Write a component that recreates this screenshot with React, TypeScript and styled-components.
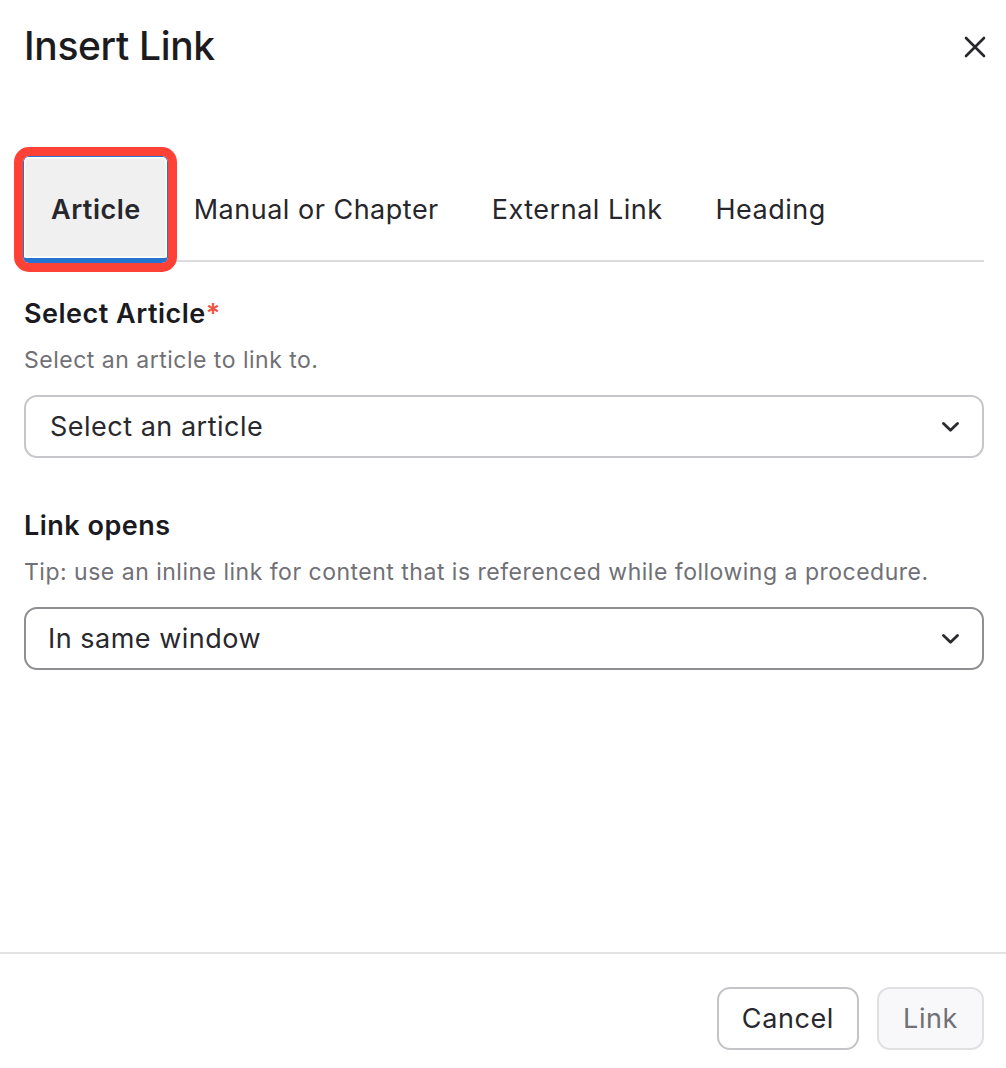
import React from "react";
import styled, { createGlobalStyle } from "styled-components";

const Global = createGlobalStyle`
  html, body { margin: 0; padding: 0; background: #ffffff; }
  body { font-family: Inter, "Noto Sans", "Liberation Sans", sans-serif; color: #1c1c21; }
  * { box-sizing: border-box; }
`;

const Dialog = styled.div`
  width: 1006px;
  height: 1068px;
  display: flex;
  flex-direction: column;
  background: #fff;
  overflow: hidden;
`;

const Header = styled.div`
  display: flex;
  justify-content: space-between;
  align-items: flex-start;
  padding: 22px 20px 0 24px;
`;

const Title = styled.h1`
  margin: 0;
  font-size: 39px;
  line-height: 48px;
  font-weight: 500;
  color: #1b1b20;
  letter-spacing: -0.35px;
`;

const CloseButton = styled.button`
  width: 22px;
  height: 22px;
  margin-top: 14px;
  padding: 0;
  border: none;
  background: none;
  display: flex;
  align-items: center;
  justify-content: center;
  cursor: pointer;
`;

const Body = styled.div`
  flex: 1;
  padding: 87px 22px 0 24px;
  display: flex;
  flex-direction: column;
`;

const TabList = styled.div`
  display: flex;
  border-bottom: 2px solid #dcdcde;
`;

const Tab = styled.button<{ $active?: boolean }>`
  height: 105px;
  padding: 4px 26px 0 27px;
  margin-bottom: -2px;
  border: none;
  background: ${(p) => (p.$active ? "#f0f0f0" : "transparent")};
  font-family: inherit;
  font-size: 27px;
  letter-spacing: 0.5px;
  font-weight: ${(p) => (p.$active ? 600 : 400)};
  color: #26262b;
  border-radius: 5px;
  border-bottom: 4px solid ${(p) => (p.$active ? "#2474d0" : "transparent")};
  box-shadow: ${(p) => (p.$active ? "inset 0 0 0 1.5px #ffffff, 0 0 0 1px #2474d0" : "none")};
  outline: ${(p) => (p.$active ? "9px solid #ff4136" : "none")};
  outline-offset: 1px;
  cursor: pointer;
  position: relative;
  z-index: ${(p) => (p.$active ? 1 : 0)};
`;

const Field = styled.div<{ $top: number }>`
  display: flex;
  flex-direction: column;
  margin-top: ${(p) => p.$top}px;
`;

const Label = styled.div`
  font-size: 27px;
  line-height: 32px;
  letter-spacing: 0.5px;
  font-weight: 600;
  color: #1a1a1f;
`;

const Required = styled.span`
  color: #f0533f;
`;

const Hint = styled.div`
  margin-top: 16px;
  font-size: 23px;
  line-height: 28px;
  letter-spacing: 0.5px;
  color: #707076;
`;

const Select = styled.div<{ $strong?: boolean }>`
  margin-top: 21px;
  height: 63px;
  border: 2px solid ${(p) => (p.$strong ? "#8e8e93" : "#c7c7cb")};
  border-radius: 13px;
  display: flex;
  align-items: center;
  justify-content: space-between;
  padding: 0 23px 0 ${(p) => (p.$strong ? 22 : 24)}px;
  font-size: 27px;
  letter-spacing: 0.5px;
  color: #28282d;
`;

const Footer = styled.div`
  border-top: 2px solid #e2e2e4;
  padding: 33px 22px 18px 24px;
  display: flex;
  justify-content: flex-end;
  gap: 18px;
`;

const Button = styled.button<{ $disabled?: boolean }>`
  height: 63px;
  padding: 0 ${(p) => (p.$disabled ? 24 : 23)}px;
  border-radius: 13px;
  font-family: inherit;
  font-size: 27px;
  letter-spacing: 0.6px;
  border: 2px solid ${(p) => (p.$disabled ? "#e0e0e3" : "#c4c4c8")};
  background: ${(p) => (p.$disabled ? "#f8f8fa" : "#ffffff")};
  color: ${(p) => (p.$disabled ? "#707076" : "#28282d")};
  cursor: ${(p) => (p.$disabled ? "default" : "pointer")};
`;

const Chevron = () => (
  <svg width="17" height="10" viewBox="0 0 17 10" fill="none">
    <path d="M1.5 1.5 L8.5 8.2 L15.5 1.5" stroke="#2a2a2f" strokeWidth="2.8" strokeLinecap="round" strokeLinejoin="round" />
  </svg>
);

export default function App() {
  return (
    <>
      <Global />
      <Dialog>
        <Header>
          <Title>Insert Link</Title>
          <CloseButton aria-label="Close">
            <svg width="22" height="22" viewBox="0 0 22 22" fill="none">
              <path d="M2 2 L20 20 M20 2 L2 20" stroke="#26262b" strokeWidth="2.6" strokeLinecap="round" />
            </svg>
          </CloseButton>
        </Header>
        <Body>
          <TabList>
            <Tab $active>Article</Tab>
            <Tab>Manual or Chapter</Tab>
            <Tab>External Link</Tab>
            <Tab>Heading</Tab>
          </TabList>
          <Field $top={36}>
            <Label>
              Select Article<Required>*</Required>
            </Label>
            <Hint>Select an article to link to.</Hint>
            <Select>
              <span>Select an article</span>
              <Chevron />
            </Select>
          </Field>
          <Field $top={52}>
            <Label>Link opens</Label>
            <Hint>Tip: use an inline link for content that is referenced while following a procedure.</Hint>
            <Select $strong>
              <span>In same window</span>
              <Chevron />
            </Select>
          </Field>
        </Body>
        <Footer>
          <Button>Cancel</Button>
          <Button $disabled>Link</Button>
        </Footer>
      </Dialog>
    </>
  );
}
